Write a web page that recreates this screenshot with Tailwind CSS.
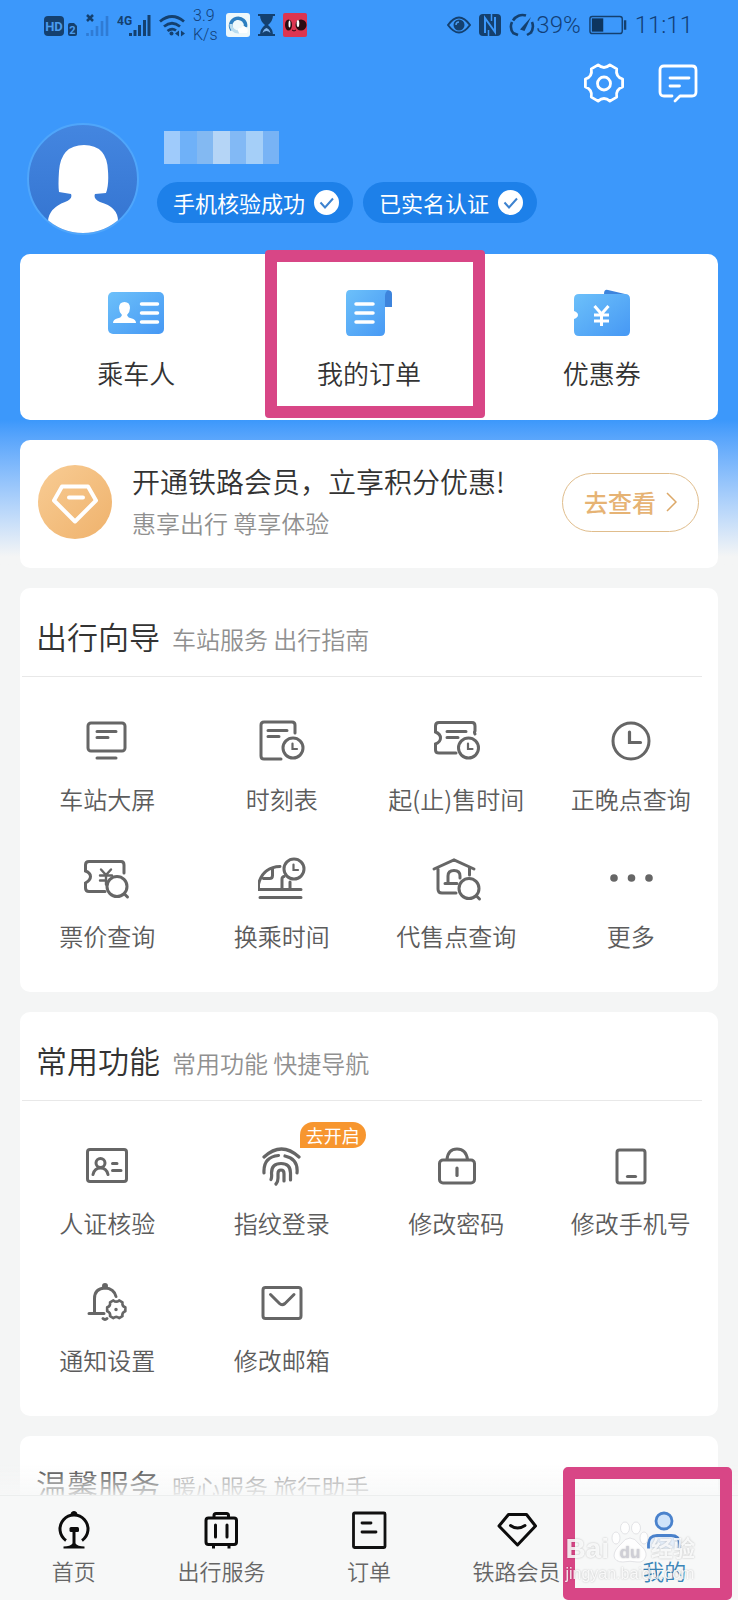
<!DOCTYPE html>
<html lang="zh-CN">
<head>
<meta charset="utf-8">
<meta name="viewport" content="width=device-width, initial-scale=1">
<title>我的</title>
<script src="https://cdn.jsdelivr.net/npm/@tailwindcss/browser@4"></script>
</head>
<body class="bg-[#f4f5f5] font-['Noto_Sans_CJK_SC',sans-serif] font-[350] text-[#333]">

<!-- Shared icon parts -->
<svg class="absolute size-0" aria-hidden="true">
  <symbol id="gear" viewBox="0 0 40 40" overflow="visible">
    <path fill="none" stroke="currentColor" stroke-linejoin="round" d="M38.6 24Q31.3 26.5 32.7 34.1L25.9 38.1Q20 33 14.1 38.1L7.3 34.1Q8.7 26.5 1.4 24L1.4 16Q8.7 13.5 7.3 5.9L14.1 1.9Q20 7 25.9 1.9L32.7 5.9Q31.3 13.5 38.6 16Z"/>
  </symbol>
  <linearGradient id="blue" x1="0" y1="0" x2="1" y2="1"><stop offset="0" stop-color="#6cc0fa"/><stop offset="1" stop-color="#4698f4"/></linearGradient>
  <linearGradient id="avatarBlue" x1="0" y1="0" x2="0" y2="1"><stop offset="0" stop-color="#4486e0"/><stop offset="1" stop-color="#3474d0"/></linearGradient>
</svg>

<main class="pb-16">
  <div class="bg-linear-to-b from-[#3c98fb] from-74% to-[#f4f5f5] to-98%">

    <!-- Status bar -->
    <div class="flex h-[50px] items-center justify-between pl-[44px] pr-[45px] font-['Roboto',sans-serif] text-[#123f78]">
      <div class="flex items-center gap-2">
        <svg width="33" height="24" viewBox="0 0 33 24"><rect x="0" y="3" width="20" height="20" rx="4" fill="#14406f"/><text x="10" y="18" text-anchor="middle" font-size="13" font-weight="700" fill="#4a9cf0">HD</text><path d="M24 12q0-2 2-2h4l3 3v8q0 2-2 2h-5q-2 0-2-2z" fill="#14406f"/><text x="28.500" y="21" text-anchor="middle" font-size="11" font-weight="700" fill="#4a9cf0">2</text></svg>
        <svg width="24" height="24" viewBox="0 0 24 24"><path d="M2 2l6 6M8 2l-6 6" stroke="#14406f" stroke-width="2.500"/><path d="M2.500 23v-3M7 23v-6M12 23V13M17 23V8M22 23V3" stroke="#2f7bd4" stroke-width="2.600"/></svg>
        <svg width="34" height="24" viewBox="0 0 34 24"><text x="0" y="12" font-size="12" font-weight="700" fill="#14406f" font-family="Roboto">4G</text><path d="M13.500 23v-3M18 23v-6M22.500 23V12M27.500 23V7M32 23V2" stroke="#14406f" stroke-width="3"/></svg>
        <svg width="26" height="24" viewBox="0 0 26 24" fill="none" stroke="#14406f" stroke-width="2.800"><path d="M1 8.500Q13-1.500 25 8.500M5 13.500Q13 7 21 13.500M8.500 18Q13 14.500 17 17.500"/><circle cx="12.500" cy="20.500" r="2" fill="#14406f" stroke="none"/><path d="M16 20.500l4-3v6zM26 20.500l-4-3v6z" fill="#14406f" stroke="none"/></svg>
        <div class="text-base leading-[19px]">3.9<br>K/s</div>
        <svg width="24" height="24" viewBox="0 0 24 24"><rect width="24" height="24" rx="3" fill="#eef8fb"/><path d="M6 17a7.500 7.500 0 1 1 13.500-3" fill="none" stroke="#2e7fc0" stroke-width="3.500"/><path d="M5 11a7.500 7.500 0 0 0 8 8" fill="none" stroke="#b9dcef" stroke-width="3"/><path d="M13 20q-3-5 2-5q3-4 5 0q3 1 1 5z" fill="#fff"/></svg>
        <svg width="17" height="22" viewBox="0 0 17 22"><path d="M0 1h17M0 21h17" stroke="#14406f" stroke-width="2"/><path d="M2 1h13q0 6-5 10q5 4 5 10H2q0-6 5-10Q2 7 2 1z" fill="#14406f"/><path d="M4.500 19q1-4 4-5q3 1 4 5q-4-4-8 0z" fill="#7fb4ee"/></svg>
        <svg width="24" height="24" viewBox="0 0 24 24"><rect width="24" height="24" rx="2" fill="#dc3550"/><ellipse cx="5.500" cy="12" rx="3.500" ry="5.500" fill="#2a0b10"/><ellipse cx="18" cy="12" rx="5.500" ry="5.500" fill="#2a0b10"/><ellipse cx="6.500" cy="11" rx="1" ry="3.500" fill="#fff"/><ellipse cx="15" cy="10.500" rx="1.300" ry="3.500" fill="#fff"/><path d="M9 17l2 1 2-1" stroke="#2a0b10" fill="none"/></svg>
      </div>
      <div class="flex items-center gap-2">
        <svg width="24" height="18" viewBox="0 0 24 18" fill="none" stroke="#14406f"><path d="M1 9Q12-6 23 9Q12 24 1 9z" stroke-width="2"/><circle cx="12" cy="9" r="5.500" fill="#14406f" stroke="none"/><path d="M9 9a3 3 0 0 1 3-3" stroke="#4a9cf0" stroke-width="1.500"/></svg>
        <svg width="22" height="22" viewBox="0 0 22 22"><rect width="22" height="22" rx="4" fill="#14406f"/><path d="M6 19V4l10 14V3" fill="none" stroke="#3c98fb" stroke-width="2"/><path d="M9.500 22v-6M12.500 0v7" stroke="#3c98fb" stroke-width="1.500"/></svg>
        <div class="flex items-center">
          <svg width="27" height="24" viewBox="0 0 27 24" fill="none" stroke="#14406f" stroke-width="2.600"><path d="M9 22l-5-2M4.500 20.500A11 11 0 0 1 3 9M4 7.500A11 11 0 0 1 17 2.500M23 9a11 11 0 0 1-2 11.500M23 19l-5 3"/><path d="M11 16.500L22 4l-6.500 14z" fill="#14406f" stroke="none"/></svg>
          <span class="text-2xl leading-8">39%</span>
        </div>
        <svg width="38" height="20" viewBox="0 0 40 20"><rect x="1" y="1" width="34" height="18" rx="2.500" fill="none" stroke="#14406f" stroke-width="1.500"/><rect x="3" y="3" width="12" height="14" fill="#0d355f"/><path d="M38 5v10" stroke="#14406f" stroke-width="2.500"/></svg>
        <span class="text-2xl leading-8">11:11</span>
      </div>
    </div>

    <!-- Page actions -->
    <div class="flex justify-end gap-[34px] pt-[13px] pr-10 text-white">
      <button type="button" aria-label="设置" class="size-10"><svg class="size-10 overflow-visible" viewBox="0 0 40 40"><use href="#gear" stroke-width="2.800"/><circle cx="20" cy="20.500" r="6.500" fill="none" stroke="currentColor" stroke-width="2.800"/></svg></button>
      <button type="button" aria-label="消息" class="size-10"><svg class="size-10" viewBox="0 0 40 40" fill="none" stroke="currentColor" stroke-width="2.800" stroke-linecap="round" stroke-linejoin="round"><path d="M14 33H6q-4 0-4-4V7q0-4 4-4h28q4 0 4 4v22q0 4-4 4H22l-5 5"/><path d="M12 15h19M12 23h9.500"/></svg></button>
    </div>

    <!-- Profile -->
    <div class="flex gap-[18px] px-[27px] pt-5">
      <svg class="size-28 shrink-0" viewBox="0 0 112 112" role="img" aria-label="头像">
        <clipPath id="face"><circle cx="56" cy="56" r="54"/></clipPath>
        <circle cx="56" cy="56" r="55" fill="url(#avatarBlue)" stroke="#4fa6fb" stroke-width="2"/>
        <path clip-path="url(#face)" fill="#fff" d="M32 69Q31 63 32 48Q34 22 57 22Q80 22 81 48Q82 62 79 70L68 71Q66 76 73 79Q91 84 91 98V112H21V98Q22 85 38 79Q46 76 44 71Z"/>
      </svg>
      <div class="min-w-0 pt-2">
        <div class="ml-[7px] flex h-[33px] w-[115px]" role="img" aria-label="用户名已隐藏">
          <span class="w-4 bg-[#9fcbfb]"></span><span class="w-[17px] bg-[#6fb1f8]"></span><span class="w-4 bg-[#83b9f2]"></span><span class="w-[17px] bg-[#b5d5f6]"></span><span class="w-4 bg-[#82b9f5]"></span><span class="w-[17px] bg-[#a5cff8]"></span><span class="w-4 bg-[#78b3f5]"></span>
        </div>
        <div class="mt-[18px] flex gap-2.5 text-[22px] font-normal text-white">
          <button type="button" class="flex h-[41px] items-center gap-[9px] rounded-full bg-[#1d80e9] pl-4 pr-[14px] whitespace-nowrap">手机核验成功<svg class="size-[25px]" viewBox="0 0 25 25"><circle cx="12.500" cy="12.500" r="12.500" fill="#fff"/><path d="M6.500 12.500l4.500 5 8-9" fill="none" stroke="#3d82cf" stroke-width="2"/></svg></button>
          <button type="button" class="flex h-[41px] items-center gap-[9px] rounded-full bg-[#1d80e9] pl-4 pr-[14px] whitespace-nowrap">已实名认证<svg class="size-[25px]" viewBox="0 0 25 25"><circle cx="12.500" cy="12.500" r="12.500" fill="#fff"/><path d="M6.500 12.500l4.500 5 8-9" fill="none" stroke="#3d82cf" stroke-width="2"/></svg></button>
        </div>
      </div>
    </div>

    <!-- Quick entries -->
    <section class="mx-5 mt-[19px] grid grid-cols-3 rounded-[10px] bg-white text-[26px] leading-9">
      <a href="#" class="flex flex-col items-center gap-[14px] pt-[31px] pb-[29px]">
        <svg class="size-14" viewBox="0 0 56 56"><rect y="7" width="56" height="42" rx="5" fill="url(#blue)"/><path fill="#fff" d="M11 23q0-6 5.500-6t5.500 6q0 4-3 7q1 3 5 3.500q4 1 4 4.500H5q0-3.500 4-4.500q4-.5 5-3.500q-3-3-3-7z"/><path d="M33.500 19h16M33.500 28h16M33.500 37h16" stroke="#fff" stroke-width="3.500" stroke-linecap="round"/></svg>
        乘车人
      </a>
      <a href="#" class="relative flex flex-col items-center gap-[14px] pt-[31px] pb-[29px]">
        <svg class="size-14" viewBox="0 0 56 56"><path d="M41 5h5q5 0 5 4v13h-7z" fill="#3d84dc"/><path d="M9 5h38q-3 2-3 6v35q0 5-5 5H9q-4 0-4-5V10q0-5 4-5z" fill="url(#blue)"/><path d="M15 19h17M15 28h17M15 37h17" stroke="#fff" stroke-width="3.500" stroke-linecap="round"/></svg>
        我的订单
        <span class="absolute -top-1 right-0 bottom-0.5 left-3 rounded-[4px] border-12 border-[#d84686]"></span>
      </a>
      <a href="#" class="flex flex-col items-center gap-[14px] pt-[31px] pb-[29px]">
        <svg class="size-14" viewBox="0 0 56 56"><path d="M30 9q0-5 4-4l17 4q3 1 3 5z" fill="#3d84dc"/><path d="M5 9h46q5 0 5 5v32q0 5-5 5H5q-5 0-5-5V34q4-1.500 4-4t-4-4V14q0-5 5-5z" fill="url(#blue)"/><path d="M20.500 21l7 8 7-8M20 30h15M20 36h15M27.500 29v12" fill="none" stroke="#fff" stroke-width="3"/></svg>
        优惠券
      </a>
    </section>

    <!-- Membership -->
    <section class="mx-5 mt-5 flex items-center gap-5 rounded-[10px] bg-white pt-5 pr-[19px] pb-6 pl-[18px]">
      <svg class="size-[74px] shrink-0" viewBox="0 0 74 74"><linearGradient id="gold" x1="0" y1="0" x2="1" y2="1"><stop offset="0" stop-color="#f8cc94"/><stop offset="1" stop-color="#efb26c"/></linearGradient><circle cx="37" cy="37" r="37" fill="url(#gold)"/><path d="M24 21.500h26l8 14-21 21-21-21z" fill="none" stroke="#fff" stroke-width="4" stroke-linejoin="round"/><path d="M31 32.500h14" stroke="#fff" stroke-width="4" stroke-linecap="round"/></svg>
      <div class="min-w-0 flex-1 whitespace-nowrap leading-[42px]">
        <h2 class="text-[28px]">开通铁路会员，立享积分优惠!</h2>
        <p class="text-2xl leading-[42px] text-[#909090]">惠享出行 尊享体验</p>
      </div>
      <button type="button" class="flex h-[59px] w-[137px] items-center justify-center gap-2.5 rounded-full border border-[#e0bd8c] text-2xl font-medium whitespace-nowrap text-[#e6b374]">去查看<svg width="11" height="20" viewBox="0 0 11 20" fill="none" stroke="#dca868" stroke-width="1.500"><path d="M1 1l9 9-9 9"/></svg></button>
    </section>
  </div>

  <!-- Travel guide -->
  <section class="mx-5 mt-5 rounded-[10px] bg-white">
    <div class="mr-4 ml-0.5 flex items-baseline gap-3 border-b border-[#e8e8e8] pt-7 pb-5 pl-[14px]">
      <h2 class="text-[31px] leading-10">出行向导</h2>
      <p class="text-2xl text-[#909090]">车站服务 出行指南</p>
    </div>
    <div class="grid grid-cols-4 gap-y-[39px] py-10 text-2xl leading-8 whitespace-nowrap text-[#5c5c5c]">
      <a href="#" class="flex flex-col items-center gap-[18px]">
        <svg class="size-12" viewBox="0 0 48 48" fill="none" stroke="#666" stroke-width="3" stroke-linecap="round"><rect x="5" y="6" width="37" height="28" rx="3"/><path d="M14 14.500h19M14 20.500h11M14 41h19"/></svg>
        车站大屏
      </a>
      <a href="#" class="flex flex-col items-center gap-[18px]">
        <svg class="size-12" viewBox="0 0 48 48" fill="none" stroke="#666" stroke-width="3" stroke-linecap="round"><path d="M37 16V8q0-3-3-3H6Q3 5 3 8v31q0 3 3 3h17M10 13.500H29M10 19.500H21"/><circle cx="35" cy="31" r="10"/><path d="M34.500 26.500V32h4.500" stroke-width="2.200"/></svg>
        时刻表
      </a>
      <a href="#" class="flex flex-col items-center gap-[18px]">
        <svg class="size-12" viewBox="0 0 48 48" fill="none" stroke="#666" stroke-width="3" stroke-linecap="round"><path d="M43 17q-1-2 0-3V9q0-3.500-3-3.500H7Q3.500 5.500 3.500 9v6q5 2 5 6t-5 6v6q0 3 3.500 3h17M15 14.500h19M15 20.500h11"/><circle cx="36.500" cy="31" r="10"/><path d="M36 26.500V32h4.500" stroke-width="2.200"/></svg>
        起(止)售时间
      </a>
      <a href="#" class="flex flex-col items-center gap-[18px]">
        <svg class="size-12" viewBox="0 0 48 48" fill="none" stroke="#666" stroke-width="3" stroke-linecap="round"><circle cx="24" cy="24" r="18"/><path d="M22.500 15v10.500H33.500" stroke-width="3.200"/></svg>
        正晚点查询
      </a>
      <a href="#" class="flex flex-col items-center gap-[18px]">
        <svg class="size-12" viewBox="0 0 48 48" fill="none" stroke="#666" stroke-width="3" stroke-linecap="round"><path d="M41 19V11q0-3.500-3-3.500H6Q2.500 7.500 2.500 11v6q5 2 5 5.500T2.500 29v5q0 3.500 3.500 3.500h16"/><path d="M18 15.500l5 5.500 5-5.500M17 21.500h12M17 26.500h6M23 21.500v9" stroke-width="2.400"/><circle cx="34" cy="32.500" r="10"/><path d="M41.500 40l3 3"/></svg>
        票价查询
      </a>
      <a href="#" class="flex flex-col items-center gap-[18px]">
        <svg class="size-12" viewBox="0 0 48 48" fill="none" stroke="#666" stroke-width="3" stroke-linecap="round"><path d="M22 12.500Q5 13 .5 30V35.500H43M2 43.500h41M5.500 24.500h6q3 0 3-3v-7M24 35V25q0-2 2-2.500M32 35v-7"/><circle cx="36" cy="15" r="10"/><path d="M35.500 10.500V16h4.500" stroke-width="2.200"/></svg>
        换乘时间
      </a>
      <a href="#" class="flex flex-col items-center gap-[18px]">
        <svg class="size-12 overflow-visible" viewBox="0 0 48 48" fill="none" stroke="#666" stroke-width="3" stroke-linecap="round"><path d="M2 15L22 6l20 9M6 15v20q0 4 4 4h14M37.500 14v7M16 29V22q0-5.500 6-5.500t6 5.500v2M13 29.500h12"/><circle cx="37" cy="34.500" r="10"/><path d="M44.500 42l3 3"/></svg>
        代售点查询
      </a>
      <a href="#" class="flex flex-col items-center gap-[18px]">
        <svg class="size-12" viewBox="0 0 48 48" fill="#666"><circle cx="7" cy="24" r="3.800"/><circle cx="24.500" cy="24" r="3.800"/><circle cx="42" cy="24" r="3.800"/></svg>
        更多
      </a>
    </div>
  </section>

  <!-- Common functions -->
  <section class="mx-5 mt-5 rounded-[10px] bg-white">
    <div class="mr-4 ml-0.5 flex items-baseline gap-3 border-b border-[#e8e8e8] pt-7 pb-5 pl-[14px]">
      <h2 class="text-[31px] leading-10">常用功能</h2>
      <p class="text-2xl text-[#909090]">常用功能 快捷导航</p>
    </div>
    <div class="grid grid-cols-4 gap-y-[39px] py-10 text-2xl leading-8 whitespace-nowrap text-[#5c5c5c]">
      <a href="#" class="flex flex-col items-center gap-[18px]">
        <svg class="size-12" viewBox="0 0 48 48" fill="none" stroke="#666" stroke-width="3" stroke-linecap="round"><rect x="4.500" y="8.500" width="39" height="32" rx="2.500"/><circle cx="17.500" cy="22" r="4.500"/><path d="M10 33.500q1.500-6.500 7.500-6.500t7.500 6.500M29.500 22.500H34M29.500 29.500H38"/></svg>
        人证核验
      </a>
      <a href="#" class="relative flex flex-col items-center gap-[18px]">
        <svg class="size-12" viewBox="0 0 48 48" fill="none" stroke="#666" stroke-width="3.200" stroke-linecap="round"><path d="M6 16Q23.500 0 41 16M6 32Q5 16 20.500 14.500M27 15Q40.500 18 39 32M13 38.500Q14 36 13.500 32Q13.500 22.500 23 22.500T32.500 32V39M18 43q2-2 2-6V32.500q0-3.500 3-3.500t3 3.500V40"/></svg>
        指纹登录
        <span class="absolute -top-[19px] left-1/2 ml-[18px] rounded-[13px] rounded-bl-none bg-[#f7962f] px-[6px] text-[18px] leading-[26px] font-normal text-white">去开启</span>
      </a>
      <a href="#" class="flex flex-col items-center gap-[18px]">
        <svg class="size-12" viewBox="0 0 48 48" fill="none" stroke="#666" stroke-width="3" stroke-linecap="round"><rect x="7.500" y="19" width="35" height="23" rx="3.500"/><path d="M15 18.500q1-10.500 10-10.500t10.500 10.500"/><path d="M25 27v7.500" stroke-width="3.200"/></svg>
        修改密码
      </a>
      <a href="#" class="flex flex-col items-center gap-[18px]">
        <svg class="size-12" viewBox="0 0 48 48" fill="none" stroke="#666" stroke-width="3" stroke-linecap="round"><rect x="10" y="9" width="28" height="33" rx="2.500"/><path d="M20.500 35.500h8" stroke-width="3.200"/></svg>
        修改手机号
      </a>
      <a href="#" class="flex flex-col items-center gap-[18px]">
        <svg class="size-12" viewBox="0 0 48 48" fill="none" stroke="#666" stroke-width="3" stroke-linecap="round"><circle cx="22" cy="8" r="1.500" fill="#666"/><path d="M11.500 35V20.500Q11.500 10.500 22 10Q31 10.500 33 18.500M6 35.500h15"/><path d="M20 40.500q2 2 4 0"/><g color="#666"><use href="#gear" x="23.500" y="21.500" width="19.500" height="19.500" stroke-width="5.500"/></g><circle cx="33" cy="31.500" r="1" fill="#666" stroke-width="1.500"/></svg>
        通知设置
      </a>
      <a href="#" class="flex flex-col items-center gap-[18px]">
        <svg class="size-12" viewBox="0 0 48 48" fill="none" stroke="#666" stroke-width="3" stroke-linecap="round"><rect x="5" y="9.500" width="38" height="31" rx="2.500"/><path d="M12.500 16.500l9 9q2.500 2.500 5.500 0l9-9"/></svg>
        修改邮箱
      </a>
    </div>
  </section>

  <!-- Care services -->
  <section class="mx-5 mt-5 rounded-t-[10px] bg-white">
    <div class="ml-0.5 flex items-baseline gap-3 pt-7 pb-5 pl-[14px]">
      <h2 class="text-[31px] leading-10">温馨服务</h2>
      <p class="text-2xl text-[#909090]">暖心服务 旅行助手</p>
    </div>
  </section>
</main>

<!-- Bottom navigation -->
<div class="fixed inset-x-0 bottom-0">
  <div class="h-8 bg-linear-to-b from-[#fbfcfc]/0 to-[#f7f8f8]/85"></div>
  <nav class="grid grid-cols-5 border-t border-[#eceeee] bg-[#f7f8f8] pt-[14px] pb-4 text-[22px] leading-7 whitespace-nowrap text-[#666]">
    <a href="#" class="flex flex-col items-center gap-1.5">
      <svg class="size-10" viewBox="0 0 40 40" fill="none" stroke="#0c0c0c"><path d="M12 30.500a14 14 0 1 1 16 0" stroke-width="3"/><path d="M17 4.500q0-3 3-3t3 3" fill="#0c0c0c" stroke-width="1"/><rect x="15.500" y="17" width="9.500" height="5" rx="1.500" fill="#0c0c0c" stroke="none"/><path d="M20 20v15" stroke-width="3"/><path d="M9.500 38.500v-2q7 0 9-3h3q2 3 9 3v2z" fill="#0c0c0c" stroke="none"/></svg>
      首页
    </a>
    <a href="#" class="flex flex-col items-center gap-1.5">
      <svg class="size-10" viewBox="0 0 40 40" fill="none" stroke="#0c0c0c" stroke-width="3"><rect x="5" y="8" width="30.500" height="26.500" rx="2.500"/><path d="M13 8V5.500q0-2 2-2h10.500q2 0 2 2V8M12.500 35v3.500M28 35v3.500"/><path d="M14.500 15v12M26 15v12" stroke-linecap="round"/></svg>
      出行服务
    </a>
    <a href="#" class="flex flex-col items-center gap-1.5">
      <svg class="size-10" viewBox="0 0 40 40" fill="none" stroke="#111" stroke-width="2.800"><rect x="4.500" y="3" width="31.500" height="34.500" rx="1"/><path d="M13 13h9M13 22h14" stroke-linecap="round"/></svg>
      订单
    </a>
    <a href="#" class="flex flex-col items-center gap-1.5">
      <svg class="size-10" viewBox="0 0 40 40" fill="none" stroke="#0c0c0c" stroke-width="3" stroke-linejoin="round" stroke-linecap="round"><path d="M11.500 4.500h18l9 11.500-18 19-18.500-19z"/><path d="M13.500 15.500q7 5 14.500 0"/></svg>
      铁路会员
    </a>
    <a href="#" aria-current="page" class="relative flex flex-col items-center gap-1.5 text-[#3c86b8]">
      <svg class="size-10" viewBox="0 0 40 40" stroke="#4a82cc" stroke-width="2.800"><circle cx="20" cy="11" r="8" fill="#cfe3fa"/><path d="M4.500 38.500V34q0-8.500 8.500-8.500h14q8.500 0 8.500 8.500v4.500" fill="#e6effa"/></svg>
      我的
      <span class="absolute -top-[43px] right-[6px] -bottom-4 -left-[27px] rounded-[5px] border-12 border-[#d84686]"></span>
      <span class="absolute -left-[25px] top-[5px] font-['Liberation_Sans','Noto_Sans_CJK_SC',sans-serif] text-white/85 [text-shadow:0_0_2px_rgb(0_0_0/0.25)]" aria-hidden="true">
        <span class="flex h-12 items-end text-[28px] leading-7 font-bold">Bai<svg class="mx-0.5 h-[42px] w-[38px]" viewBox="0 0 38 42"><g fill="#fff" fill-opacity="0.85" stroke="#d8d8dc" stroke-width="0.700"><ellipse cx="5" cy="17" rx="4" ry="6"/><ellipse cx="14" cy="7" rx="4.500" ry="6"/><ellipse cx="25" cy="7" rx="4.500" ry="6"/><ellipse cx="33" cy="17" rx="4" ry="6"/><path d="M19 17q5 0 9 6q8 6 7 12q-2 7-9 6q-7-1.500-14 0q-8 0-9-6q0-6 7-12q4-6 9-6z"/></g><text x="19" y="37" text-anchor="middle" font-size="17" font-weight="700" fill="#cfcfd6">du</text></svg><span class="text-[22px]">经验</span></span>
        <span class="block text-base leading-[22px]">jingyan.baidu.com</span>
      </span>
    </a>
  </nav>
</div>
</body>
</html>
